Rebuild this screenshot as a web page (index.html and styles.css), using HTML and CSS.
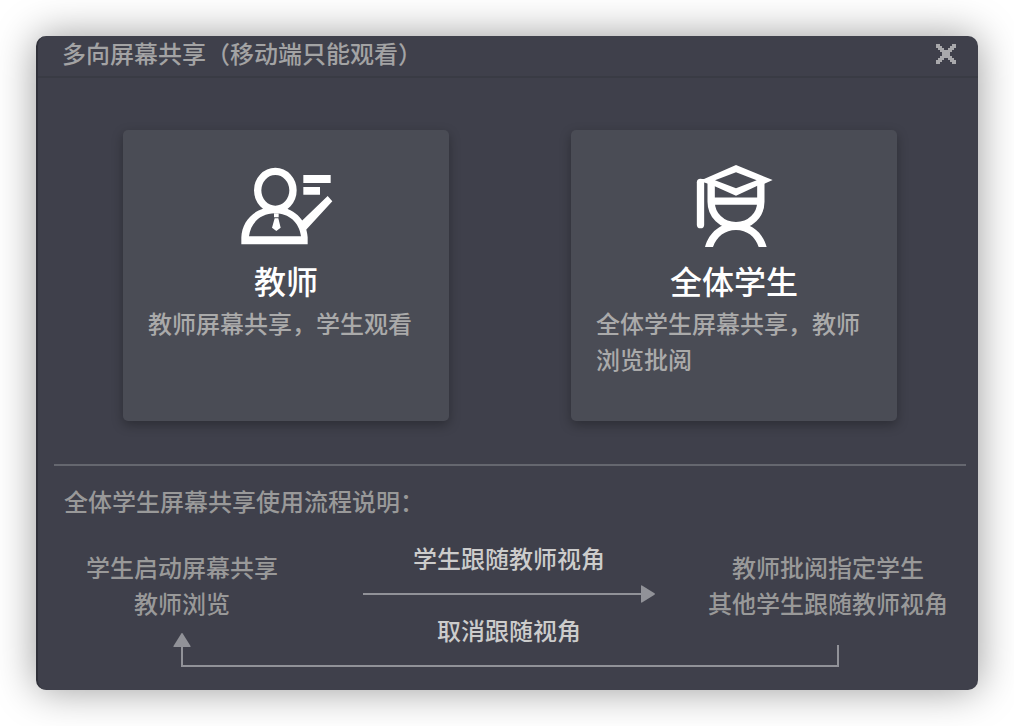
FILE: index.html
```html
<!DOCTYPE html>
<html lang="zh-CN">
<head>
<meta charset="utf-8">
<title>多向屏幕共享</title>
<link rel="stylesheet" href="styles.css">
</head>
<body>
<main class="dialog">
  <header class="titlebar">
    <h1 class="title">多向屏幕共享（移动端只能观看）</h1>
    <button class="close" type="button" aria-label="关闭">
      <svg viewBox="0 0 10 10" shape-rendering="crispEdges" aria-hidden="true">
        <path d="M0 0h2v1h1v1h1v1h2v-1h1v-1h1v-1h2v2h-1v1h-1v1h-1v2h1v1h1v1h1v2h-2v-1h-1v-1h-1v-1h-2v1h-1v1h-1v1h-2v-2h1v-1h1v-1h1v-2h-1v-1h-1v-1h-1z"/>
      </svg>
    </button>
  </header>

  <section class="cards">
    <button class="card" type="button">
      <svg class="card-icon" viewBox="54 36 288 264" aria-hidden="true">
        <ellipse class="line" cx="166" cy="121" rx="53" ry="57"/>
        <path class="fill" fill-rule="evenodd" d="M64 283V262C66 208 110 170 165 170S260 208 263 262V283ZM87 259H243C238 218 207 190 165 190S92 218 87 259Z"/>
        <path class="fill" d="M162 190H176V202H162ZM164 205H175L182 233L169 243L156 233ZM250 75H332V99H250ZM250 111H300V134H250ZM323 138L337 154L257 241L242 216Z"/>
      </svg>
      <span class="card-name">教师</span>
      <span class="card-text">教师屏幕共享，学生观看</span>
    </button>
    <button class="card" type="button">
      <svg class="card-icon" viewBox="48 36 288 264" aria-hidden="true">
        <path class="line round" d="M91.500 97V224"/>
        <path class="fill" fill-rule="evenodd" d="M91 87H102L198 45L308 90L283 101L272 103L198 137L124 104L98 96ZM135 91L198 115L260 91L198 67Z"/>
        <path class="line" d="M123.500 98V155C123.500 195 155 227 198 227S272.500 195 272.500 155V98M124 153.500H272"/>
        <path class="fill" d="M105 291C117 247 152 218 198 218S278 247 290 291H266C256 260 231 240 198 240S140 260 129 291Z"/>
      </svg>
      <span class="card-name">全体学生</span>
      <span class="card-text">全体学生屏幕共享，教师浏览批阅</span>
    </button>
  </section>

  <section class="guide">
    <h2 class="guide-title">全体学生屏幕共享使用流程说明：</h2>
    <div class="flow">
      <p class="step">学生启动屏幕共享<br>教师浏览</p>
      <div class="middle">
        <p class="action">学生跟随教师视角</p>
        <div class="arrow">
          <svg class="head-right" viewBox="0 0 14 18" aria-hidden="true"><path d="M0 1Q0 0 1 .5L13.500 8.300Q14.300 9 13.500 9.700L1 17.500Q0 18 0 17Z"/></svg>
        </div>
        <p class="action">取消跟随视角</p>
      </div>
      <p class="step">教师批阅指定学生<br>其他学生跟随教师视角</p>
      <div class="return">
        <svg class="head-up" viewBox="0 0 18 14" aria-hidden="true"><path d="M1 14Q0 14 .5 13L8.300.5Q9-.3 9.700.5L17.500 13Q18 14 17 14Z"/></svg>
        <div class="return-line"></div>
      </div>
    </div>
  </section>
</main>
</body>
</html>
```
FILE: styles.css
```css
* {
  box-sizing: border-box;
}

body {
  margin: 0;
  padding: 36px;
  background: #fff;
  font: 500 24px/36px "Noto Sans CJK SC", sans-serif;
  color: #999;
}

h1,
h2,
p {
  margin: 0;
  font: inherit;
}

button {
  border: 0;
  font: inherit;
  cursor: pointer;
}

.dialog {
  border-left: 2px solid #2f3039;
  border-radius: 10px;
  background: #3f404b;
  box-shadow: 0 0 40px rgba(0, 0, 0, 0.4);
}

.titlebar {
  display: flex;
  align-items: flex-start;
  justify-content: space-between;
  height: 42px;
  padding: 0 21px 0 24px;
  border-bottom: 2px solid #393b44;
}

.title {
  line-height: 34px;
  color: #a3a3a4;
}

.close {
  display: flex;
  padding: 8px 1px;
  background: none;
}

.close svg {
  width: 20px;
  height: 20px;
  fill: #a9a9ac;
}

.cards {
  display: flex;
  gap: 122px;
  padding: 52px 81px 43px 85px;
}

.card {
  display: flex;
  flex: 1;
  flex-direction: column;
  align-items: center;
  justify-content: flex-start;
  padding: 32px 25px 44px;
  border-radius: 5px;
  background: #4a4c55;
  box-shadow: 0 4px 12px rgba(0, 0, 0, 0.3);
}

.card-icon {
  width: 96px;
  height: 88px;
}

.fill {
  fill: #fff;
}

.line {
  fill: none;
  stroke: #fff;
  stroke-width: 22px;
}

.round {
  stroke-linecap: round;
}

.card-name {
  margin: 6px 0 1px;
  font-size: 32px;
  line-height: 48px;
  color: #fff;
}

.card-text {
  align-self: stretch;
  text-align: left;
  color: #aaa;
}

.guide {
  margin: 0 12px 0 16px;
  padding: 17px 18px 23px 10px;
  border-top: 2px solid #65676f;
}

.flow {
  display: grid;
  grid-template-columns: 236px 1fr 240px;
  grid-template-rows: 93px auto;
  margin-top: 21px;
}

.step {
  padding-top: 9px;
  text-align: center;
}

.middle {
  grid-row: 1 / 3;
  grid-column: 2;
  padding: 0 53px 0 63px;
  text-align: center;
}

.action {
  color: #ccc;
}

.arrow {
  display: flex;
  align-items: center;
  height: 36px;
}

.arrow::before {
  content: "";
  flex: 1;
  height: 2px;
  background: #919298;
}

.head-right {
  width: 14px;
  height: 18px;
  fill: #919298;
}

.head-up {
  display: block;
  width: 18px;
  height: 14px;
  margin-left: -8px;
  fill: #919298;
}

.return {
  grid-row: 2;
  grid-column: 1 / 4;
  margin: 0 109px 0 117px;
}

.return-line {
  height: 22px;
  margin-top: -2px;
  border: 2px solid #919298;
  border-top: 0;
}
```
